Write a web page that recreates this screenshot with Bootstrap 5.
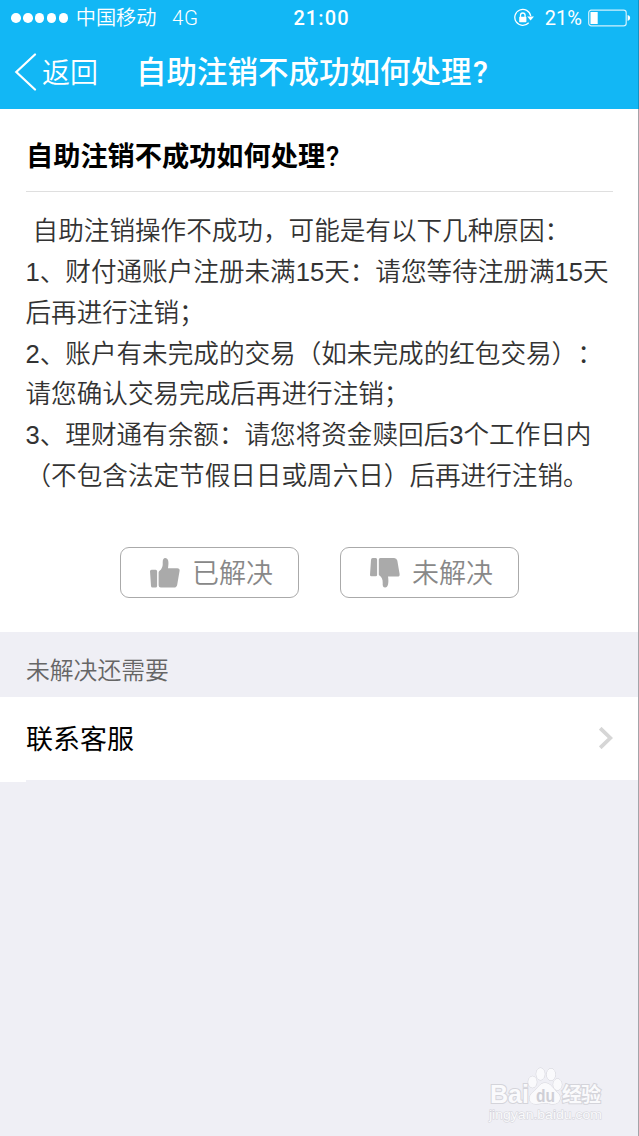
<!DOCTYPE html>
<html lang="zh-CN">
<head>
<meta charset="utf-8">
<meta name="viewport" content="width=device-width, initial-scale=1">
<title>自助注销不成功如何处理?</title>
<link href="https://cdn.jsdelivr.net/npm/bootstrap@5.3.0/dist/css/bootstrap.min.css" rel="stylesheet">
<style>
  body { background: #efeff5; font-family: "Liberation Sans", "Noto Sans CJK SC", sans-serif; color: #000; overflow: hidden; text-spacing-trim: space-all; }
  .screen { height: 1136px; border-right: 1px solid #a4a4a9; }
  .topbar { background: #12b7f5; height: 109px; margin-right: -1px; border-right: 1px solid #0f94c7; color: #fff; }
  .status { height: 36px; font: 20px/36px Roboto, "Noto Sans CJK SC", sans-serif; padding: 0 8px 0 11px; }
  .signal { gap: 2.2px; }
  .signal i { width: 9.7px; height: 9.7px; border-radius: 50%; background: #fff; }
  .carrier { font-weight: 350; font-size: 20.2px; margin-left: 7.5px; }
  .network { font-size: 20.5px; font-weight: 300; margin-left: 15.5px; letter-spacing: .8px; }
  .clock { font-weight: 500; letter-spacing: 1.1px; padding-left: 5px; }
  .titlebar { height: 73px; padding-left: 14px; }
  .back-text { font-size: 28px; font-weight: 350; line-height: 40px; margin-left: 5px; width: 58px; padding-top: 2px; }
  .page-title { font-family: Roboto, "Noto Sans CJK SC", sans-serif; font-size: 30.5px; font-weight: 500; line-height: 44px; margin-left: 36px; }
  .page-title span { margin-left: 1.5px; }
  .article { height: 523px; padding: 0 25px 0 26px; }
  .question { font-family: Roboto, "Noto Sans CJK SC", sans-serif; font-size: 27.2px; font-weight: 700; line-height: 40px; padding-top: 28px; height: 83px; border-bottom: 1px solid #dfdfdf; }
  .question span { font-weight: 500; margin-left: 1px; }
  .answer { font-size: 25.6px; line-height: 40.85px; color: #333; padding-top: 19px; height: 355px; font-weight: 350; }
  .answer p { white-space: pre; margin-left: -.5px; }
  .vote { width: 179px; height: 51px; border: 1px solid #aaa; border-radius: 9px; padding: 0 0 0 28px; font-size: 27px; font-weight: 350; color: #888; }
  .vote span { padding-top: 4px; margin-left: 11px; }
  .vote:hover { border-color: #aaa; color: #888; }
  .section-label { height: 64.5px; padding: 13px 26px 0; font-size: 23.8px; font-weight: 350; color: #666; }
  .contact { height: 83.5px; padding: 0 25px 0 26px; font-size: 27px; }
  .contact span { padding-top: 4px; }
  .contact-line { height: 2px; width: 26px; }
  .stamp { right: 33px; bottom: 11px; width: 120px; height: 62px; }
</style>
</head>
<body>
<div class="screen position-relative d-flex flex-column">
  <header class="topbar">
    <div class="status d-flex align-items-center position-relative">
      <div class="signal d-flex"><i></i><i></i><i></i><i></i><i></i></div>
      <span class="carrier">中国移动</span>
      <span class="network">4G</span>
      <span class="clock position-absolute start-50 translate-middle-x">21:00</span>
      <svg class="ms-auto" width="22" height="20" viewBox="0 0 22 20" fill="none" stroke="#fff" stroke-width="1.3"><path d="M15.7 14.8A8 8 0 1 1 17.7 8"/><path d="M14.200 8.400h6.800l-3.400 4z" fill="#fff" stroke="none"/><path d="M7.5 9V7.300a2.300 2.300 0 0 1 4.600 0V9"/><rect x="6.200" y="8.800" width="7.200" height="5.400" rx=".6" fill="#fff" stroke="none"/></svg>
      <span style="margin-left:10px">21%</span>
      <svg style="margin-left:6px;margin-right:-1px" width="43" height="18" viewBox="0 0 43 18"><rect x=".7" y="1.2" width="37.5" height="15.6" rx="2.6" fill="none" stroke="#fff" stroke-opacity=".8" stroke-width="1.2"/><rect x="2.5" y="3" width="7.2" height="12" fill="#fff"/><path d="M39.6 6.1q2.6.6 2.6 2.9t-2.6 2.9z" fill="#fff"/></svg>
    </div>
    <div class="titlebar d-flex align-items-center">
      <svg style="margin-top:-2px" width="23" height="38" viewBox="0 0 23 38" fill="none" stroke="#fff" stroke-width="2.2" stroke-linecap="round"><path d="M21 1.5L2.3 19 21 36.5"/></svg>
      <span class="back-text text-nowrap">返回</span>
      <span class="page-title text-nowrap">自助注销不成功如何处理<span>?</span></span>
    </div>
  </header>

  <main class="article bg-white">
    <h1 class="question mb-0 text-nowrap">自助注销不成功如何处理<span>?</span></h1>
    <div class="answer">
      <p class="mb-0"> 自助注销操作不成功，可能是有以下几种原因：</p>
      <p class="mb-0">1、财付通账户注册未满15天：请您等待注册满15天</p>
      <p class="mb-0">后再进行注销；</p>
      <p class="mb-0">2、账户有未完成的交易（如未完成的红包交易）<span>：</span></p>
      <p class="mb-0">请您确认交易完成后再进行注销；</p>
      <p class="mb-0">3、理财通有余额：请您将资金赎回后3个工作日内</p>
      <p class="mb-0">（不包含法定节假日日或周六日）后再进行注销。</p>
    </div>
    <div class="d-flex justify-content-center" style="gap:41px">
      <button type="button" class="btn vote d-flex align-items-center text-nowrap">
        <svg width="32" height="32" viewBox="0 0 32 32" fill="#aaa"><path d="M1 14.3q0-1.6 1.6-1.6h4q1.500 0 1.500 1.500v14.700q0 1.600-1.600 1.600H3.500q-1.400 0-1.500-1.500z"/><path d="M10.300 14q4-2.800 3.400-8.500-.1-4.500 2.500-4.500c3 0 4 3.500 2.800 10.200h9.300q2.600 0 2.300 2.500l-2.400 14q-.5 2.800-3.200 2.800H11.800q-2.200 0-2.200-2.200V15.500q0-1 .7-1.500z"/></svg>
        <span>已解决</span>
      </button>
      <button type="button" class="btn vote d-flex align-items-center text-nowrap">
        <svg width="32" height="32" viewBox="0 0 32 32" fill="#aaa"><path d="M2 3q.1-2 1.700-2h3.100q1.300 0 1.300 1.500v15.300q0 1.500-1.500 1.500H2.500q-1.600 0-1.500-1.500z"/><path d="M9.800 2.500q0-1.500 1.500-1.500h13.800q2.600 0 3.200 2.600l2.300 13.300q.4 2.600-2.200 2.600H19c1 6.500 0 11-2.800 11-2.300 0-2.700-1.800-2.500-4.500.2-4-1-5.700-3.300-7.500q-.6-.5-.6-1.300z"/></svg>
        <span>未解决</span>
      </button>
    </div>
  </main>

  <div class="section-label d-flex align-items-center">未解决还需要</div>
  <a href="#" class="contact bg-white d-flex align-items-center justify-content-between text-decoration-none text-black">
    <span>联系客服</span>
    <svg width="14" height="22" viewBox="0 0 14 22" fill="none" stroke="#d6d6d6" stroke-width="3.8"><path d="M1.2 1.2L11.3 11 1.2 20.8"/></svg>
  </a>
  <div class="contact-line bg-white"></div>

  <svg class="stamp position-absolute" viewBox="0 0 120 62" fill="#fafafc" stroke="#d4d4da" stroke-width="1" paint-order="stroke" font-family="Liberation Sans, Noto Sans CJK SC, sans-serif">
    <text x="5" y="40" font-size="26" font-weight="700" stroke-width="2" textLength="39" lengthAdjust="spacingAndGlyphs">Bai</text>
    <ellipse cx="47.5" cy="19" rx="4.300" ry="5.700"/><ellipse cx="55.500" cy="11" rx="4.300" ry="6"/><ellipse cx="66" cy="11.500" rx="4.300" ry="6"/><ellipse cx="72.500" cy="21.500" rx="4.300" ry="5.700"/>
    <path d="M60 20c6 0 8 6 12 9 5 4 4 12-4 12-4 0-5-1-8-1s-5 1-9 1c-8 0-8-8-3-12 5-3 6-9 12-9z"/>
    <text x="51" y="39" font-size="18" font-weight="700" fill="#cfcfd6" stroke="none" textLength="19" lengthAdjust="spacingAndGlyphs">du</text>
    <text x="77" y="39" font-size="20" font-weight="700" stroke-width="2" textLength="39">经验</text>
    <text x="4" y="56" font-size="13" stroke-width="1" textLength="113" lengthAdjust="spacingAndGlyphs">jingyan.baidu.com</text>
  </svg>
</div>
<script src="https://cdn.jsdelivr.net/npm/bootstrap@5.3.0/dist/js/bootstrap.bundle.min.js"></script>
</body>
</html>
